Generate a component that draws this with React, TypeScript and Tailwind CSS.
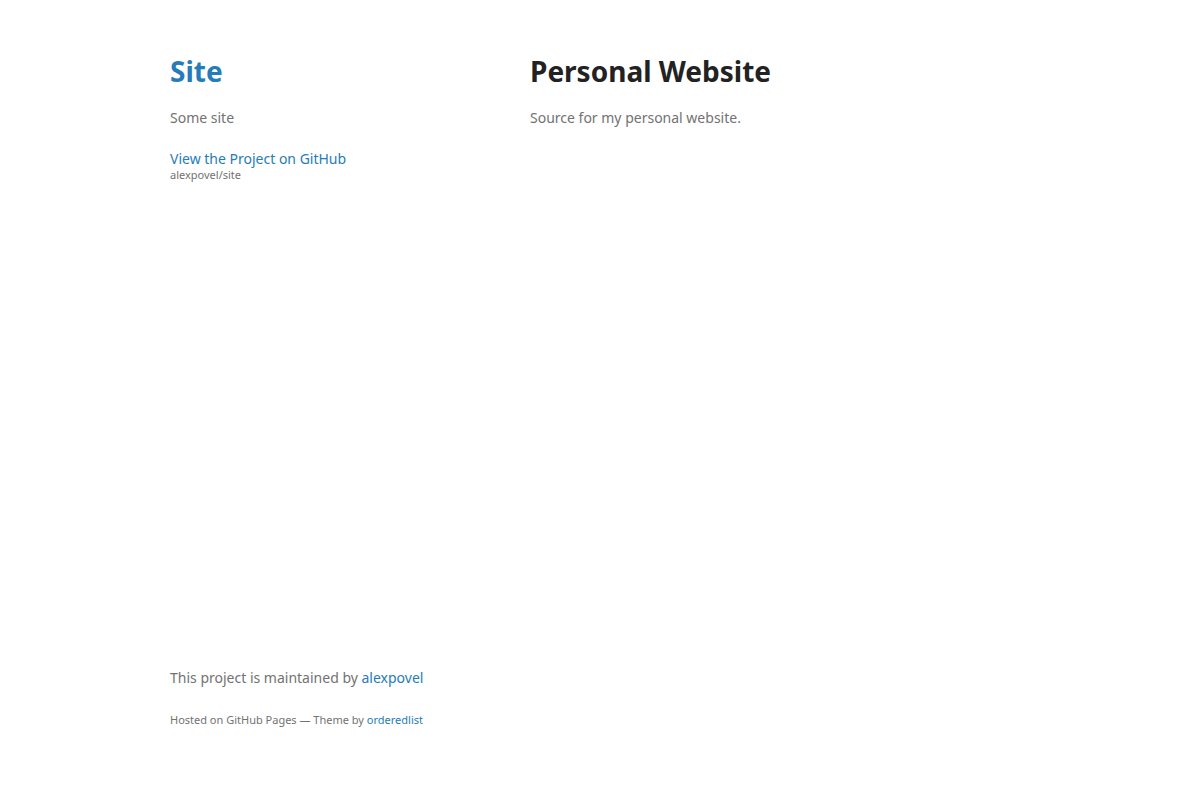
import React from "react";

export default function App() {
  return (
    <div
      className="min-h-screen flex flex-col bg-white px-[50px] pt-[56px] pb-[51px] text-[14px] leading-[1.5] text-[#727272]"
      style={{ fontFamily: '"Noto Sans", "Liberation Sans", sans-serif' }}
    >
      <div className="w-[860px] mx-auto flex-1 flex flex-col">
        <div className="flex justify-between">
          <header className="w-[270px]">
            <h1 className="text-[28px] leading-[1.1] font-bold mb-[20px] mt-0">
              <a href="#" className="text-[#267CB9]">Site</a>
            </h1>
            <p className="mb-[20px]">Some site</p>
            <p className="mb-[20px]">
              <a href="#" className="text-[#267CB9]">View the Project on GitHub</a>
              <small className="block text-[11px] leading-[12px] text-[#727272]">alexpovel/site</small>
            </p>
          </header>
          <section className="w-[500px] pb-[50px]">
            <h1 className="text-[28px] leading-[1.1] font-bold text-[#222] mb-[20px]">Personal Website</h1>
            <p className="mb-[20px]">Source for my personal website.</p>
          </section>
        </div>
        <footer className="w-[270px] mt-auto">
          <p className="mb-[20px]">
            This project is maintained by <a href="#" className="text-[#267CB9]">alexpovel</a>
          </p>
          <p className="mb-[20px]">
            <small className="text-[11px]">
              Hosted on GitHub Pages — Theme by <a href="#" className="text-[#267CB9]">orderedlist</a>
            </small>
          </p>
        </footer>
      </div>
    </div>
  );
}
